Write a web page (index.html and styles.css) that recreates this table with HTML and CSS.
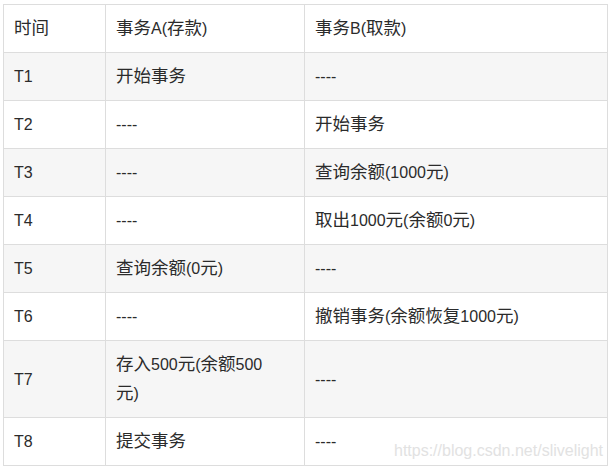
FILE: index.html
```html
<!DOCTYPE html>
<html lang="zh-CN">
<head>
<meta charset="utf-8">
<title>事务表</title>
<link rel="stylesheet" href="styles.css">
</head>
<body>
<div class="page">
  <table class="tx">
    <colgroup>
      <col class="c1"><col class="c2"><col class="c3">
    </colgroup>
    <thead>
      <tr><th><span class="zh">时间</span></th><th><span class="zh">事务</span>A(<span class="zh">存款</span>)</th><th><span class="zh">事务</span>B(<span class="zh">取款</span>)</th></tr>
    </thead>
    <tbody>
      <tr><td>T1</td><td><span class="zh">开始事务</span></td><td>----</td></tr>
      <tr><td>T2</td><td>----</td><td><span class="zh">开始事务</span></td></tr>
      <tr><td>T3</td><td>----</td><td><span class="zh">查询余额</span>(1000<span class="zh">元</span>)</td></tr>
      <tr><td>T4</td><td>----</td><td><span class="zh">取出</span>1000<span class="zh">元</span>(<span class="zh">余额</span>0<span class="zh">元</span>)</td></tr>
      <tr><td>T5</td><td><span class="zh">查询余额</span>(0<span class="zh">元</span>)</td><td>----</td></tr>
      <tr><td>T6</td><td>----</td><td><span class="zh">撤销事务</span>(<span class="zh">余额恢复</span>1000<span class="zh">元</span>)</td></tr>
      <tr><td>T7</td><td><span class="zh">存入</span>500<span class="zh">元</span>(<span class="zh">余额</span>500<br><span class="zh">元</span>)</td><td>----</td></tr>
      <tr><td>T8</td><td><span class="zh">提交事务</span></td><td>----</td></tr>
    </tbody>
  </table>
  <div class="watermark">https://blog.csdn.net/slivelight</div>
</div>
</body>
</html>
```

FILE: styles.css
```css
html, body {
  margin: 0;
  padding: 0;
  background: #ffffff;
}

.page {
  position: relative;
  padding: 4px 0 0 3px;
  width: 605px;
}

.tx {
  border-collapse: collapse;
  table-layout: fixed;
  width: 604px;
  font-family: "Liberation Sans", Arial, "Noto Sans CJK SC", sans-serif;
  font-size: 16px;
  color: #2b2b2b;
}

.c1 { width: 102px; }
.c2 { width: 199px; }
.c3 { width: 303px; }

.tx th,
.tx td {
  border: 1px solid #dddddd;
  padding: 9px 10px;
  line-height: 29px;
  text-align: left;
  vertical-align: middle;
  font-weight: normal;
}

.tx tr {
  height: 48px;
}

.tx thead tr {
  background: #ffffff;
}

.tx tbody tr:nth-child(odd) {
  background: #f6f6f6;
}

.tx tbody tr:nth-child(even) {
  background: #ffffff;
}

.zh {
  font-family: "Noto Sans CJK SC", sans-serif;
  font-size: 17.5px;
  line-height: 1;
}

.watermark {
  position: absolute;
  right: 5px;
  bottom: 6px;
  font-family: "Liberation Sans", Arial, sans-serif;
  font-size: 16px;
  line-height: 18px;
  color: #e2e2e2;
}
```
